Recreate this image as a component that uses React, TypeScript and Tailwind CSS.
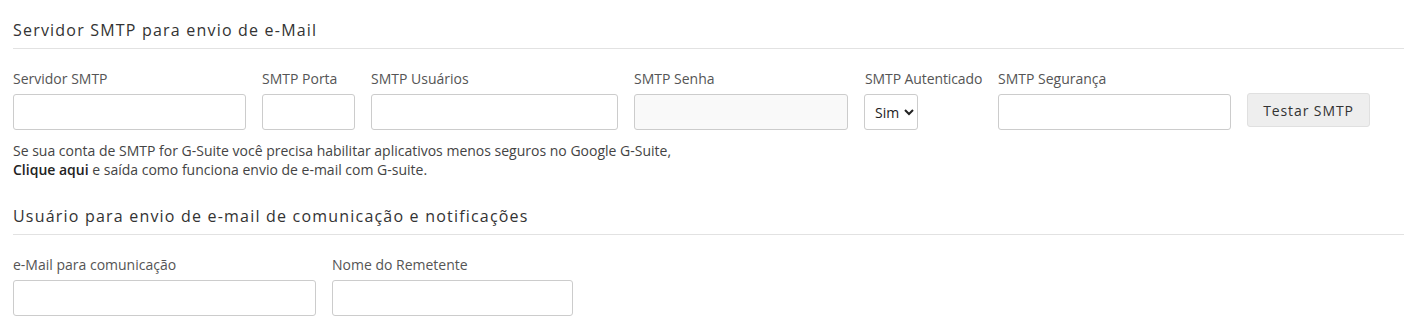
import React from 'react';

const inputCls =
  'h-[36px] w-full rounded-[3px] border border-[#cccccc] px-2 text-[14px] text-[#333] outline-none';

const Field = ({ label, width, children }: { label: string; width: string; children?: React.ReactNode }) => (
  <div className={`flex flex-col ${width}`}>
    <label className="mb-[5px] h-[20px] whitespace-nowrap text-[14px] leading-[20px] text-[#555]">{label}</label>
    {children ?? <input type="text" className={`${inputCls} bg-white`} />}
  </div>
);

const SectionTitle = ({ children }: { children: React.ReactNode }) => (
  <div className="border-b border-[#e2e2e2] pb-[7px]">
    <h2 className="text-[16px] leading-[22px] tracking-[1.2px] text-[#333]">{children}</h2>
  </div>
);

export default function App() {
  return (
    <div className="min-h-[331px] bg-white pl-[13px] pt-[19px]" style={{ fontFamily: '"Open Sans", sans-serif' }}>
      <SectionTitle>Servidor SMTP para envio de e-Mail</SectionTitle>

      <div className="mt-[20px] flex items-start gap-[16px]">
        <Field label="Servidor SMTP" width="w-[233px]" />
        <Field label="SMTP Porta" width="w-[93px]" />
        <Field label="SMTP Usuários" width="w-[247px]" />
        <Field label="SMTP Senha" width="w-[214px]">
          <input type="password" readOnly className={`${inputCls} bg-[#f9f9f9]`} />
        </Field>
        <div className="flex w-[118px] flex-col">
          <label className="mb-[5px] h-[20px] whitespace-nowrap pl-px text-[14px] leading-[20px] tracking-[-0.1px] text-[#555]">SMTP Autenticado</label>
          <select defaultValue="Sim" className="h-[36px] w-[54px] rounded-[3px] border border-[#cccccc] bg-white pl-[6px] text-[14px] text-[#222]">
            <option>Sim</option>
            <option>Não</option>
          </select>
        </div>
        <Field label="SMTP Segurança" width="w-[233px]" />
        <button className="mt-[24px] h-[34px] w-[123px] rounded-[3px] border border-[#e0e0e0] bg-[#eeeeee] text-[14px] tracking-[0.9px] text-[#333]">
          Testar SMTP
        </button>
      </div>

      <p className="mt-[11px] text-[14px] leading-[19px] text-[#444]">
        Se sua conta de SMTP for G-Suite você precisa habilitar aplicativos menos seguros no Google G-Suite,
        <br />
        <a className="font-semibold text-[#222]">Clique aqui</a> e saída como funciona envio de e-mail com G-suite.
      </p>

      <div className="mt-[26px]">
        <SectionTitle>Usuário para envio de e-mail de comunicação e notificações</SectionTitle>
      </div>

      <div className="mt-[20px] flex items-start gap-[16px]">
        <Field label="e-Mail para comunicação" width="w-[303px]" />
        <Field label="Nome do Remetente" width="w-[241px]" />
      </div>
    </div>
  );
}
